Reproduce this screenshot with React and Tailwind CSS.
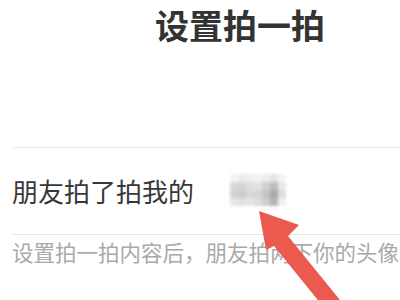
import React from 'react';

const pixels = [
  ['#f4f4f4', '#ececec', '#eeeeee', '#f2f2f2', '#ececec', '#e4e4e4', '#f3f3f3'],
  ['#d9d9d9', '#d4d4d4', '#dedede', '#e2e2e2', '#cfcfcf', '#bdbdbd', '#e8e8e8'],
  ['#d2d2d2', '#cccccc', '#d8d8d8', '#d6d6d6', '#c4c4c4', '#aaaaaa', '#dcdcdc'],
  ['#e6e6e6', '#e0e0e0', '#e4e4e4', '#dcdcdc', '#cdcdcd', '#b4b4b4', '#f0f0f0'],
];

function Mosaic() {
  return (
    <div className="relative ml-[36px] blur-[1.5px]">
      {pixels.map((row, i) => (
        <div key={i} className="flex">
          {row.map((c, j) => (
            <div key={j} className="w-[8px] h-[8px]" style={{ background: c }} />
          ))}
        </div>
      ))}
    </div>
  );
}

function Arrow() {
  return (
    <svg className="absolute inset-0 pointer-events-none" width="400" height="300" viewBox="0 0 400 300">
      <polygon
        points="259,211 299,225 288,236 344,305 330,315 274,246 266,250"
        fill="#ea5a4e"
      />
    </svg>
  );
}

export default function App() {
  return (
    <div
      className="relative w-[400px] h-[300px] overflow-hidden bg-white"
      style={{ fontFamily: '"Noto Sans CJK SC", "Noto Sans", sans-serif' }}
    >
      <div className="pl-[155px] pt-[4px] h-[147px]">
        <h1 className="text-[34px] leading-[42px] font-bold text-[#333333]">设置拍一拍</h1>
      </div>
      <div className="ml-3 border-t border-[#ececec]">
        <div className="h-[86px] flex items-center pb-[2px]">
          <span className="text-[26px] text-[#383838]">朋友拍了拍我的</span>
          <Mosaic />
        </div>
      </div>
      <div className="ml-3 border-t border-[#e8e8e8]">
        <p className="text-[21.5px] leading-[34px] text-[#a9a9a9] whitespace-nowrap">
          设置拍一拍内容后，朋友拍两下你的头像
        </p>
      </div>
      <Arrow />
    </div>
  );
}
